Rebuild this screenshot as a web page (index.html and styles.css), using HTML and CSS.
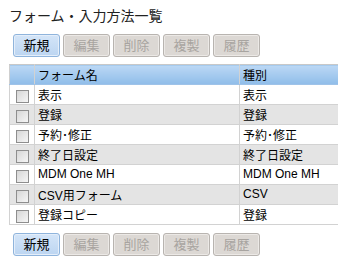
FILE: index.html
```html
<!DOCTYPE HTML>
<html>
	<head>
		<title>フォーム・入力方法一覧</title>
		<meta charset="utf-8" />
		<link rel="stylesheet" href="styles.css">
	</head>
	<body>
		<h1 class="page-title">フォーム・入力方法一覧</h1>

		<div class="toolbar">
			<button class="tool-btn active">新規</button>
			<button class="tool-btn" disabled>編集</button>
			<button class="tool-btn" disabled>削除</button>
			<button class="tool-btn" disabled>複製</button>
			<button class="tool-btn" disabled>履歴</button>
		</div>

		<table class="form-list">
			<thead>
				<tr>
					<th class="col-check"></th>
					<th class="col-name">フォーム名</th>
					<th class="col-type">種別</th>
				</tr>
			</thead>
			<tbody>
				<tr><td class="col-check"><span class="check"></span></td><td>表示</td><td>表示</td></tr>
				<tr><td class="col-check"><span class="check"></span></td><td>登録</td><td>登録</td></tr>
				<tr><td class="col-check"><span class="check"></span></td><td>予約･修正</td><td>予約･修正</td></tr>
				<tr><td class="col-check"><span class="check"></span></td><td>終了日設定</td><td>終了日設定</td></tr>
				<tr><td class="col-check"><span class="check"></span></td><td>MDM One MH</td><td>MDM One MH</td></tr>
				<tr><td class="col-check"><span class="check"></span></td><td>CSV用フォーム</td><td>CSV</td></tr>
				<tr><td class="col-check"><span class="check"></span></td><td>登録コピー</td><td>登録</td></tr>
			</tbody>
		</table>

		<div class="toolbar bottom">
			<button class="tool-btn active">新規</button>
			<button class="tool-btn" disabled>編集</button>
			<button class="tool-btn" disabled>削除</button>
			<button class="tool-btn" disabled>複製</button>
			<button class="tool-btn" disabled>履歴</button>
		</div>
	</body>
</html>
```

FILE: styles.css
```css
body {
	margin: 0;
	padding: 0 0 0 9px;
	background: #fff;
	font-family: "Liberation Sans", "Noto Sans CJK JP", sans-serif;
	font-size: 12px;
	color: #000;
}

.page-title {
	margin: 6px 0 0;
	font-size: 14px;
	font-weight: normal;
	line-height: 20px;
	color: #222;
}

.toolbar {
	display: flex;
	gap: 3px;
	margin: 8px 0 0 4px;
}

.toolbar.bottom {
	margin-top: 8px;
}

.tool-btn {
	box-sizing: border-box;
	width: 47px;
	height: 23px;
	padding: 0;
	font-family: inherit;
	font-size: 13px;
	line-height: 20px;
	border: 1px solid #b8b4b0;
	border-radius: 3px;
	background: #dcd8d4;
	box-shadow: inset 0 0 0 1px #ece9e6;
	color: #a8a4a0;
}

.tool-btn.active {
	border-color: #8fb4dc;
	background: linear-gradient(#d4e5f8, #bcd5f1);
	box-shadow: inset 0 0 0 1px #e4eefa;
	color: #000;
}

.form-list {
	margin-top: 7px;
	border-collapse: collapse;
	width: 329px;
	table-layout: fixed;
}

.form-list th,
.form-list td {
	box-sizing: border-box;
	height: 20px;
	padding: 0 0 1px 3px;
	text-align: left;
	font-weight: normal;
	white-space: nowrap;
	border: 1px solid #d2d2d2;
}

.form-list th:last-child,
.form-list td:last-child {
	border-right: none;
}

.form-list th {
	background: linear-gradient(#bcd8f5, #8fbde9);
	border-top-color: #c8c8c8;
	border-left-color: #e4eef9;
	border-bottom-color: #9fc3e8;
}

.form-list th:first-child {
	border-left-color: #cfcfcf;
}

.form-list tbody tr:nth-child(even) td {
	background: #e4e4e4;
}

.col-check {
	width: 25px;
}

.col-name {
	width: 205px;
}

.col-type {
	width: 99px;
}

.form-list td.col-check {
	padding: 0;
	text-align: center;
}

.check {
	display: inline-block;
	width: 11px;
	height: 11px;
	margin-top: 3px;
	vertical-align: top;
	border: 1px solid #8e8e8e;
	background: linear-gradient(135deg, #d6d6d6, #f6f6f6);
}
```
